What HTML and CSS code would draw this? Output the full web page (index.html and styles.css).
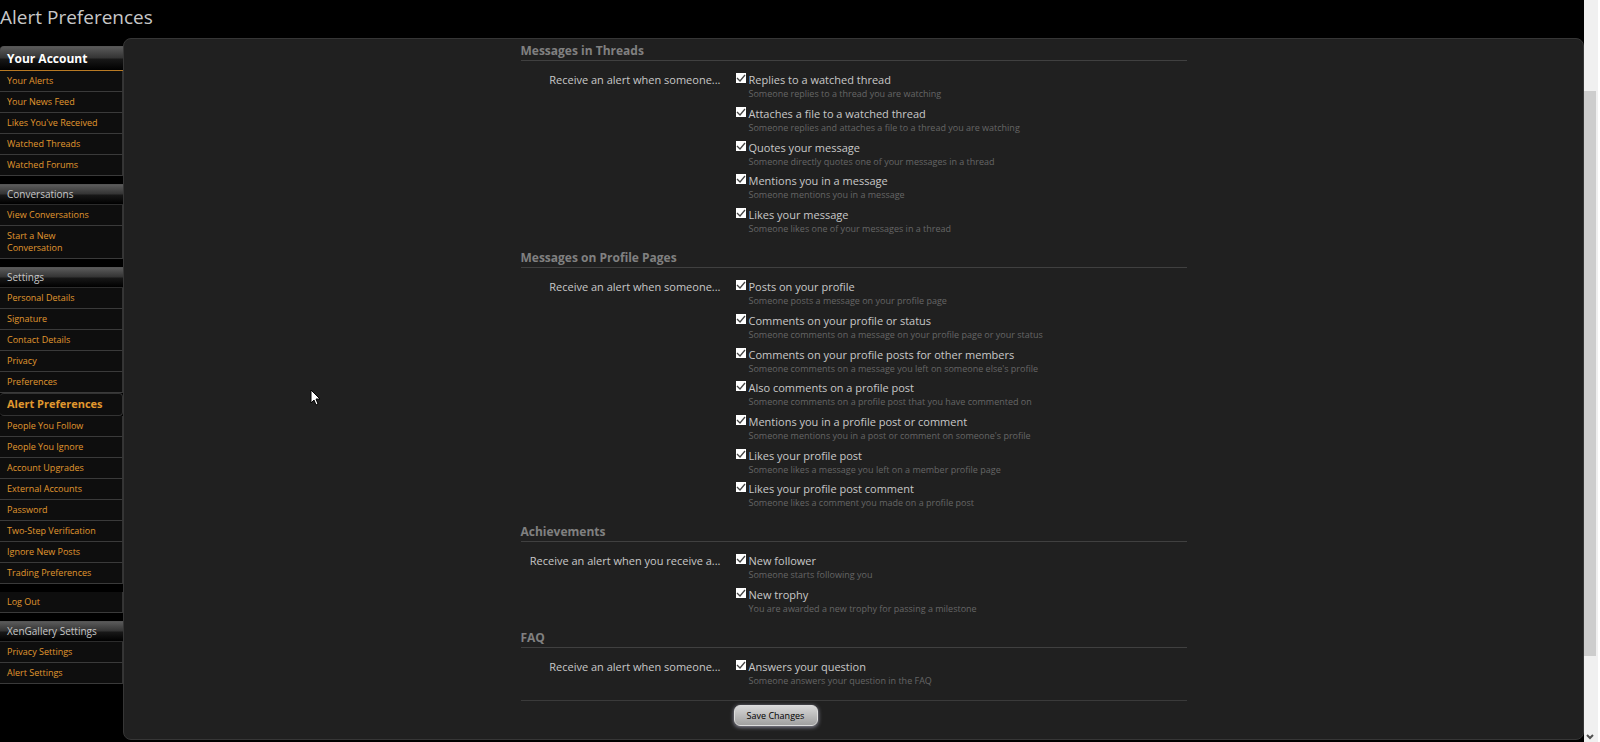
FILE: index.html
```html
<!DOCTYPE html>
<html lang="en">
<head>
  <meta charset="UTF-8">
  <meta name="viewport" content="width=device-width, initial-scale=1.0">
  <title>Alert Preferences</title>
  <link rel="stylesheet" href="styles.css">
</head>
<body>
  <div class="page">
    <h1>Alert Preferences</h1>
    <div class="columns">
      <nav class="sidebar">
        <section>
          <h2 class="primary">Your Account</h2>
          <ul>
            <li><a href="#">Your Alerts</a></li>
            <li><a href="#">Your News Feed</a></li>
            <li><a href="#">Likes You've Received</a></li>
            <li><a href="#">Watched Threads</a></li>
            <li><a href="#">Watched Forums</a></li>
          </ul>
        </section>
        <section>
          <h2>Conversations</h2>
          <ul>
            <li><a href="#">View Conversations</a></li>
            <li><a href="#">Start a New<br>Conversation</a></li>
          </ul>
        </section>
        <section>
          <h2>Settings</h2>
          <ul>
            <li><a href="#">Personal Details</a></li>
            <li><a href="#">Signature</a></li>
            <li><a href="#">Contact Details</a></li>
            <li><a href="#">Privacy</a></li>
            <li><a href="#">Preferences</a></li>
            <li><a class="active" href="#">Alert Preferences</a></li>
            <li><a href="#">People You Follow</a></li>
            <li><a href="#">People You Ignore</a></li>
            <li><a href="#">Account Upgrades</a></li>
            <li><a href="#">External Accounts</a></li>
            <li><a href="#">Password</a></li>
            <li><a href="#">Two-Step Verification</a></li>
            <li><a href="#">Ignore New Posts</a></li>
            <li><a href="#">Trading Preferences</a></li>
          </ul>
        </section>
        <section>
          <ul>
            <li><a href="#">Log Out</a></li>
          </ul>
        </section>
        <section>
          <h2>XenGallery Settings</h2>
          <ul>
            <li><a href="#">Privacy Settings</a></li>
            <li><a href="#">Alert Settings</a></li>
          </ul>
        </section>
      </nav>

      <main class="panel">
        <form>
          <h3>Messages in Threads</h3>
          <div class="group">
            <div class="caption">Receive an alert when someone...</div>
            <ul>
              <li><input type="checkbox" id="watched" checked><label for="watched">Replies to a watched thread</label><p>Someone replies to a thread you are watching</p></li>
              <li><input type="checkbox" id="attach" checked><label for="attach">Attaches a file to a watched thread</label><p>Someone replies and attaches a file to a thread you are watching</p></li>
              <li><input type="checkbox" id="quote" checked><label for="quote">Quotes your message</label><p>Someone directly quotes one of your messages in a thread</p></li>
              <li><input type="checkbox" id="mention" checked><label for="mention">Mentions you in a message</label><p>Someone mentions you in a message</p></li>
              <li><input type="checkbox" id="like" checked><label for="like">Likes your message</label><p>Someone likes one of your messages in a thread</p></li>
            </ul>
          </div>

          <h3>Messages on Profile Pages</h3>
          <div class="group">
            <div class="caption">Receive an alert when someone...</div>
            <ul>
              <li><input type="checkbox" id="post" checked><label for="post">Posts on your profile</label><p>Someone posts a message on your profile page</p></li>
              <li><input type="checkbox" id="comment" checked><label for="comment">Comments on your profile or status</label><p>Someone comments on a message on your profile page or your status</p></li>
              <li><input type="checkbox" id="comment-other" checked><label for="comment-other">Comments on your profile posts for other members</label><p>Someone comments on a message you left on someone else's profile</p></li>
              <li><input type="checkbox" id="comment-also" checked><label for="comment-also">Also comments on a profile post</label><p>Someone comments on a profile post that you have commented on</p></li>
              <li><input type="checkbox" id="post-mention" checked><label for="post-mention">Mentions you in a profile post or comment</label><p>Someone mentions you in a post or comment on someone's profile</p></li>
              <li><input type="checkbox" id="post-like" checked><label for="post-like">Likes your profile post</label><p>Someone likes a message you left on a member profile page</p></li>
              <li><input type="checkbox" id="comment-like" checked><label for="comment-like">Likes your profile post comment</label><p>Someone likes a comment you made on a profile post</p></li>
            </ul>
          </div>

          <h3>Achievements</h3>
          <div class="group">
            <div class="caption">Receive an alert when you receive a...</div>
            <ul>
              <li><input type="checkbox" id="follow" checked><label for="follow">New follower</label><p>Someone starts following you</p></li>
              <li><input type="checkbox" id="trophy" checked><label for="trophy">New trophy</label><p>You are awarded a new trophy for passing a milestone</p></li>
            </ul>
          </div>

          <h3>FAQ</h3>
          <div class="group">
            <div class="caption">Receive an alert when someone...</div>
            <ul>
              <li><input type="checkbox" id="answer" checked><label for="answer">Answers your question</label><p>Someone answers your question in the FAQ</p></li>
            </ul>
          </div>

          <div class="submit">
            <button type="submit">Save Changes</button>
          </div>
        </form>
      </main>
    </div>
  </div>

  <div class="scrollbar">
    <div class="thumb"></div>
    <svg width="8" height="6" viewBox="0 0 8 6"><path d="M1 1l3 3 3-3" fill="none" stroke="#505050" stroke-width="2"/></svg>
  </div>

  <svg class="cursor" width="12" height="18" viewBox="0 0 12 18"><path d="M1 1v13l3-3 2 5 2-1-2-5h4z" fill="#fff" stroke="#000" stroke-width="1"/></svg>
</body>
</html>
```
FILE: styles.css
```css
* {
  box-sizing: border-box;
}
body {
  margin: 0;
  min-height: 100vh;
  display: flex;
  background: #000;
  color: #c8c8c8;
  font-family: "Trebuchet MS", "Open Sans", sans-serif;
  font-size: 11px;
}
h1, h2, h3, p, ul {
  margin: 0;
  padding: 0;
}
ul {
  list-style: none;
}
.page {
  flex: 1;
  min-width: 0;
}
h1 {
  height: 38px;
  font-size: 19px;
  font-weight: normal;
  line-height: 34px;
}
.columns {
  display: flex;
}

/* sidebar */
.sidebar {
  width: 123px;
  padding-top: 8px;
  font-size: 9px;
}
.sidebar section {
  margin-bottom: 8px;
}
.sidebar h2 {
  height: 21px;
  padding-left: 7px;
  border-top: 1px solid #555;
  border-bottom: 1px solid #2c2c2c;
  background: linear-gradient(#5a5a5a, #333 48%, #181818 52%, #000);
  font-size: 10px;
  font-weight: normal;
  line-height: 19px;
}
.sidebar h2.primary {
  height: 25px;
  border-bottom-color: #b87a24;
  border-top-left-radius: 4px;
  color: #fff;
  font-size: 12px;
  font-weight: bold;
  line-height: 23px;
}
.sidebar a {
  display: block;
  padding: 4px 7px;
  border-right: 1px solid #333;
  border-bottom: 1px solid #3a3a3a;
  background: #0e0e0e;
  color: #e0982e;
  line-height: 12px;
  text-decoration: none;
}
.sidebar a.active {
  padding: 4px 7px 5px;
  border: 1px solid #333;
  border-left: 0;
  border-radius: 4px;
  font-size: 11px;
  font-weight: bold;
}

/* preferences form */
.panel {
  flex: 1;
  border: 1px solid #363636;
  border-radius: 8px;
  margin-bottom: 2px;
  padding-bottom: 13px;
  background: #202020;
}
form {
  max-width: 666px;
  margin: 0 auto;
}
h3 {
  height: 22px;
  border-bottom: 1px solid #404040;
  color: #808080;
  font-size: 12px;
  line-height: 23px;
}
.group {
  display: flex;
  gap: 15px;
  padding: 10px 0 6px;
}
.caption {
  width: 200px;
  line-height: 17px;
  text-align: right;
}
.group li {
  display: grid;
  grid-template-columns: 10px 1fr;
  column-gap: 3px;
  align-content: start;
  height: 34px;
}
.group li:nth-child(3n) {
  height: 33px;
}
.group label {
  line-height: 17px;
}
.group p {
  grid-column: 2;
  color: #666;
  font-size: 9px;
  line-height: 11px;
}
input[type="checkbox"] {
  appearance: none;
  width: 10px;
  height: 10px;
  margin: 2px 0 0;
  background: #fff url("data:image/svg+xml,%3Csvg xmlns='http://www.w3.org/2000/svg' viewBox='0 0 10 10'%3E%3Cpath d='M1 5l3 3 5-6' fill='none' stroke='%23444' stroke-width='1.3'/%3E%3C/svg%3E");
}
.submit {
  margin-top: 2px;
  padding: 4px 0 0 213px;
  border-top: 1px solid #3a3a3a;
}
button {
  width: 84px;
  height: 21px;
  padding: 0;
  border: 1px solid #ddd;
  border-radius: 6px;
  background: linear-gradient(#d8d8d8, #a0a0a0);
  box-shadow: 0 1px 4px #99a;
  color: #000;
  font-family: inherit;
  font-size: 9px;
}

.scrollbar {
  width: 16px;
  padding: 91px 3px 2px 1px;
  border-right: 2px solid #fff;
  background: #f0f0f0;
  display: flex;
  flex-direction: column;
  align-items: center;
  justify-content: space-between;
}
.thumb {
  width: 12px;
  height: 87%;
  background: #cdcdcd;
}
.cursor {
  position: absolute;
  left: 310px;
  top: 389px;
}
```
